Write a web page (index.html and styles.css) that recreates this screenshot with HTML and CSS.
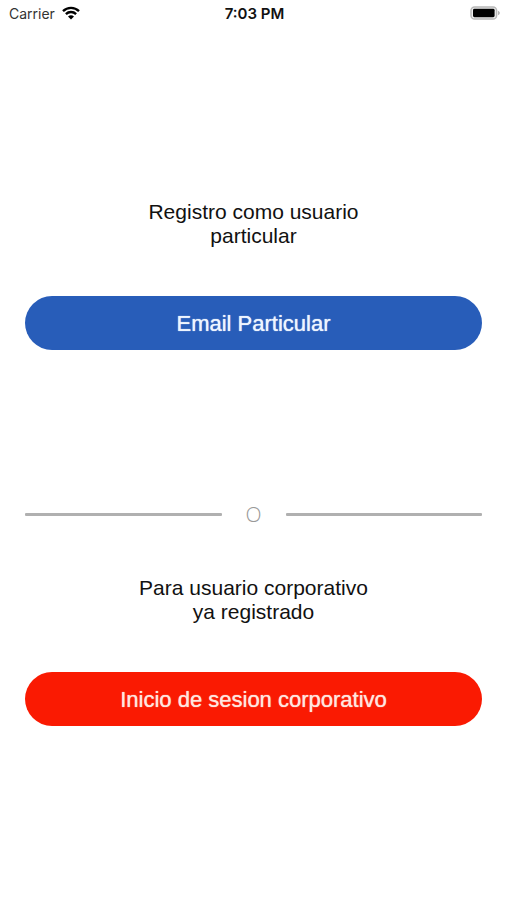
FILE: index.html
```html
<!DOCTYPE html>
<html lang="es">
<head>
    <meta charset="UTF-8">
    <meta name="viewport" content="width=device-width, initial-scale=1.0">
    <title>Registro</title>
    <link rel="stylesheet" href="styles.css">
</head>
<body>
    <header class="status-bar">
        <div class="carrier">
            <span>Carrier</span>
            <svg class="wifi-icon" viewBox="0 0 18 14" width="18" height="14" aria-hidden="true">
                <path d="M1 5.1a11.6 11.6 0 0 1 16 0" />
                <path d="M3.9 8.1a7.4 7.4 0 0 1 10.2 0" />
                <path class="wifi-dot" d="M9 13.6 6 10.6a4.3 4.3 0 0 1 6 0z" />
            </svg>
        </div>
        <div class="time">7:03 PM</div>
        <div class="battery">
            <svg viewBox="0 0 30 14" width="30" height="14" aria-hidden="true">
                <rect x="1" y="0.9" width="25.6" height="12.2" rx="3.6" fill="#eee" stroke="#b8b8b8" stroke-width="1.5" />
                <rect x="3" y="2.8" width="21.6" height="8.4" rx="1.4" fill="#000" />
                <path d="M28 4.8c2.4 1 2.4 3.4 0 4.4z" fill="#b4b4b4" />
            </svg>
        </div>
    </header>

    <main class="content">
        <section class="option">
            <p class="option-text">Registro como usuario particular</p>
            <button type="button" class="btn btn-personal">Email Particular</button>
        </section>

        <div class="divider"><span>O</span></div>

        <section class="option">
            <p class="option-text">Para usuario corporativo ya registrado</p>
            <button type="button" class="btn btn-corporate">Inicio de sesion corporativo</button>
        </section>
    </main>
</body>
</html>
```

FILE: styles.css
```css
* {
    box-sizing: border-box;
}

body {
    margin: 0;
    background: #fff;
    color: #111;
    font-family: "Liberation Sans", Arial, sans-serif;
}

.status-bar {
    display: grid;
    grid-template-columns: 1fr auto 1fr;
    align-items: center;
    height: 26px;
    padding: 0 7px 0 9px;
    font-family: Inter, sans-serif;
    font-size: 14px;
}

.carrier {
    display: flex;
    align-items: center;
    gap: 7px;
    color: #333;
}

.wifi-icon {
    fill: none;
    stroke: #000;
    stroke-width: 2.4;
}

.wifi-icon .wifi-dot {
    fill: #000;
    stroke: none;
}

.time {
    font-size: 15px;
    font-weight: 600;
}

.battery {
    display: flex;
    justify-content: flex-end;
}

.content {
    padding: 174px 25px 48px;
}

.option-text {
    max-width: 240px;
    margin: 0 auto 48px;
    font-size: 21px;
    line-height: 24px;
    text-align: center;
}

.btn {
    display: block;
    width: 100%;
    height: 54px;
    padding: 2px 0 0;
    border: none;
    border-radius: 27px;
    font-family: inherit;
    font-size: 22px;
    text-shadow: 0 0 1px currentColor;
    cursor: pointer;
}

.btn-personal {
    background: #285db9;
    color: #eef5ff;
}

.btn-corporate {
    background: #fa1a02;
    color: #ffe6df;
}

.divider {
    display: flex;
    align-items: center;
    margin: 152px 0 50px;
    color: #999;
    font-family: "Open Sans", sans-serif;
    font-size: 21px;
    font-weight: 300;
    line-height: 24px;
}

.divider span {
    width: 64px;
    text-align: center;
}

.divider::before,
.divider::after {
    content: "";
    flex: 1;
    height: 3px;
    border-radius: 1px;
    background: #b0b0b0;
}
```
